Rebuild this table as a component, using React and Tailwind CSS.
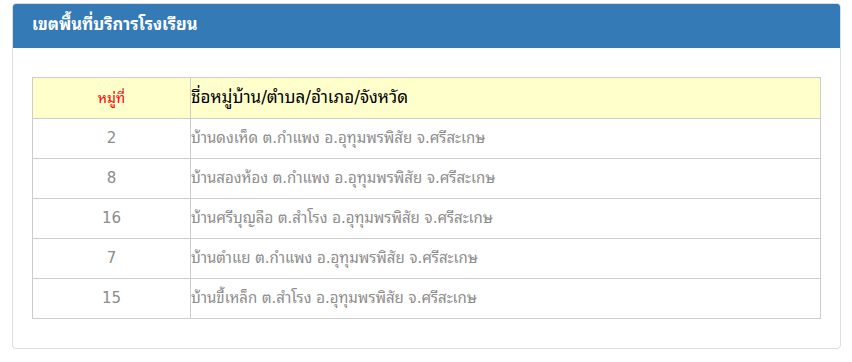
export default function App() {
  const rows = [
    ["2", "บ้านดงเห็ด ต.กำแพง อ.อุทุมพรพิสัย จ.ศรีสะเกษ"],
    ["8", "บ้านสองห้อง ต.กำแพง อ.อุทุมพรพิสัย จ.ศรีสะเกษ"],
    ["16", "บ้านศรีบุญลือ ต.สำโรง อ.อุทุมพรพิสัย จ.ศรีสะเกษ"],
    ["7", "บ้านตำแย ต.กำแพง อ.อุทุมพรพิสัย จ.ศรีสะเกษ"],
    ["15", "บ้านขี้เหล็ก ต.สำโรง อ.อุทุมพรพิสัย จ.ศรีสะเกษ"],
  ];
  return (
    <div className="w-[852px] h-[362px] bg-white pt-[3px] pl-[12px] font-['Tahoma','DejaVu_Sans','Noto_Sans_Thai_Looped','Loma',sans-serif]">
      <div className="w-[829px] h-[346px] border border-[#dddddd] rounded-[4px] overflow-hidden flex flex-col">
        <div className="h-[45px] bg-[#337ab7] text-white font-bold text-[16.5px] flex items-center pl-[20px] shrink-0 -mx-px -mt-px">
          เขตพื้นที่บริการโรงเรียน
        </div>
        <div className="pt-[29px] px-[19px]">
          <table className="w-[789px] border-collapse">
            <tbody>
              <tr className="bg-[#ffffcc] h-[41px]">
                <td className="w-[158px] border border-[#cccccc] text-center text-[14px] text-[#ff0000]">หมู่ที่</td>
                <td className="border border-[#cccccc] text-[17px] text-black pl-0">ชื่อหมู่บ้าน/ตำบล/อำเภอ/จังหวัด</td>
              </tr>
              {rows.map(([n, t]) => (
                <tr key={n} className="h-[40px]">
                  <td className="border border-[#cccccc] text-center text-[15px] text-[#8c8c8c]">{n}</td>
                  <td className="border border-[#cccccc] text-[15px] text-[#8c8c8c]">{t}</td>
                </tr>
              ))}
            </tbody>
          </table>
        </div>
      </div>
    </div>
  );
}
